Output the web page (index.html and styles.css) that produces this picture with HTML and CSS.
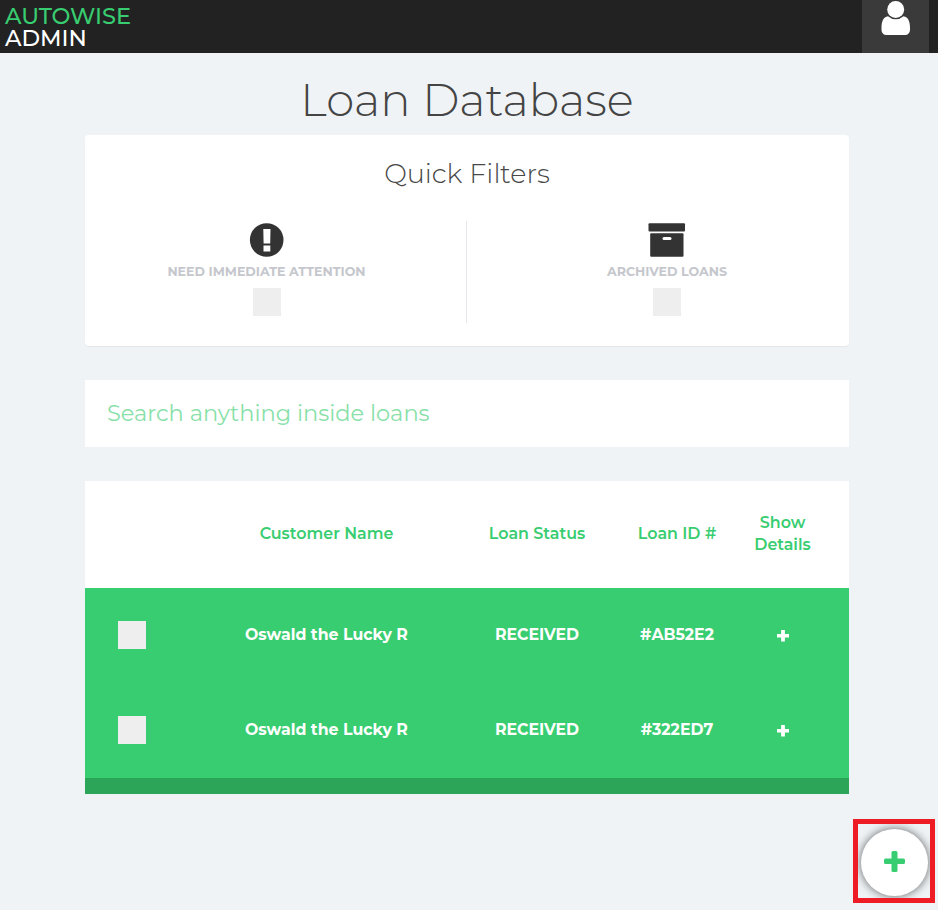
FILE: index.html
```html
<!DOCTYPE html>
<html lang="en">
<head>
<meta charset="utf-8">
<title>Autowise Admin</title>
<link rel="stylesheet" href="styles.css">
</head>
<body>
<header class="topbar">
  <div class="brand"><span class="brand-name">AUTOWISE</span><span class="brand-role">ADMIN</span></div>
  <button class="account" aria-label="Account">
    <svg width="30" height="36" viewBox="0 0 30 36"><path d="M7 16.200C2.200 17 .5 21.500.5 28v1.500C.5 33 2.500 35 6 35h17.500c3.500 0 5.500-2 5.500-5.500V28c0-6.500-1.700-11-6.500-11.800a11.500 11.500 0 0 1-15.500 0Z"/><circle cx="14.700" cy="9.500" r="8.500"/></svg>
  </button>
</header>
<main class="page">
  <h1 class="title">Loan Database</h1>
  <section class="filters">
    <h2 class="filters-title">Quick Filters</h2>
    <div class="filter-list">
      <div class="filter attention">
        <svg class="filter-icon" width="36" height="36" viewBox="0 0 36 36"><circle cx="17.700" cy="18" r="16.800"/><path class="hole" d="M14.300 7h7.200l-.3 14.500h-6.600zM14.500 23.500h6.800v6h-6.800z"/></svg>
        <span class="filter-label">NEED IMMEDIATE ATTENTION</span>
        <span class="box"></span>
      </div>
      <div class="filter">
        <svg class="filter-icon" width="38" height="36" viewBox="0 0 38 36"><rect x=".5" y="1.200" width="36.500" height="8.300" rx="1"/><rect x="2.200" y="11.200" width="33.300" height="23.600" rx="1"/><rect class="hole" x="14.500" y="15" width="9" height="3" rx="1.500"/></svg>
        <span class="filter-label">ARCHIVED LOANS</span>
        <span class="box"></span>
      </div>
    </div>
  </section>
  <input class="search" type="text" placeholder="Search anything inside loans">
  <section class="loans">
    <div class="row head">
      <span></span><span>Customer Name</span><span>Loan Status</span><span>Loan ID #</span><span>Show<br>Details</span>
    </div>
    <div class="row loan">
      <span class="box"></span><span>Oswald the Lucky R</span><span>RECEIVED</span><span>#AB52E2</span>
      <svg class="more" width="14" height="14" viewBox="0 0 14 14"><path d="M5.100 1h3.800v4h4.100v3.500H8.900v4H5.100v-4H1V5h4.100z"/></svg>
    </div>
    <div class="row loan">
      <span class="box"></span><span>Oswald the Lucky R</span><span>RECEIVED</span><span>#322ED7</span>
      <svg class="more" width="14" height="14" viewBox="0 0 14 14"><path d="M5.100 1h3.800v4h4.100v3.500H8.900v4H5.100v-4H1V5h4.100z"/></svg>
    </div>
    <div class="loans-foot"></div>
  </section>
</main>
<div class="add-frame">
  <button class="add" aria-label="Add loan">
    <svg width="22" height="22" viewBox="0 0 22 22"><path d="M9 0h3q1.500 0 1.500 1.500v6h6q1.500 0 1.500 1.500v2.500q0 1.500-1.500 1.500h-6v6.500q0 1.500-1.500 1.500H9Q7.500 21 7.500 19.500V13h-6Q0 13 0 11.500V9Q0 7.500 1.500 7.500h6v-6Q7.500 0 9 0z"/></svg>
  </button>
</div>
</body>
</html>
```
FILE: styles.css
```css
* { box-sizing: border-box; }
body {
  margin: 0;
  height: 910px;
  overflow: hidden;
  background: #eff3f6;
  font-family: Montserrat, Inter, "Open Sans", sans-serif;
  font-size: 22.5px;
  color: #333;
}
svg { display: block; }
button { border: 0; padding: 0; }

.topbar {
  display: flex;
  justify-content: space-between;
  height: 53px;
  padding-right: 9px;
  background: #222;
}
.brand {
  display: flex;
  flex-direction: column;
  padding: 5px 0 0 5px;
  font-weight: 500;
  line-height: 22px;
}
.brand-name { color: #38cd70; }
.brand-role { color: #fff; }
.account {
  display: flex;
  justify-content: center;
  width: 67px;
  background: #3a3a3a;
}
.account svg { fill: #fff; }

.page { width: 764px; margin-left: 85px; }
.title {
  margin: 0;
  height: 82px;
  padding-top: 19px;
  font-size: 45px;
  font-weight: 300;
  line-height: 55px;
  text-align: center;
  color: #444;
}

.filters {
  height: 211px;
  padding-top: 22px;
  background: #fff;
  border-radius: 4px;
  box-shadow: 0 1px 1px rgba(0, 0, 0, .05);
}
.filters-title {
  margin: 0 0 31px;
  font-size: 27px;
  font-weight: 300;
  line-height: 33px;
  text-align: center;
  color: #484848;
}
.filter-list { display: flex; }
.filter {
  display: flex;
  flex-direction: column;
  align-items: center;
  width: 382px;
  height: 102px;
  padding: 1px 0 0 18px;
}
.attention { padding: 1px 18px 0 0; border-right: 1px solid #e6e6ee; }
.filter-icon { fill: #333; }
.hole { fill: #fff; }
.filter-label {
  margin: 6px 0 8px;
  font-size: 12.65px;
  font-weight: 700;
  line-height: 16px;
  color: #c5c7cd;
}
.box { width: 28px; height: 28px; background: #eee; }

.search {
  display: block;
  width: 100%;
  height: 67px;
  margin: 34px 0;
  padding: 0 22px 2px;
  border: 0;
  background: #fff;
  font: inherit;
}
.search::placeholder { color: #38cd70; opacity: .6; }

.row {
  display: grid;
  grid-template-columns: 94px 295px 126px 154px 57px;
  align-items: center;
  justify-items: center;
  font-size: 15.75px;
  white-space: nowrap;
}
.head {
  height: 107px;
  padding-bottom: 2px;
  background: #fff;
  color: #38cd70;
  font-size: 15.9px;
  font-weight: 600;
  line-height: 22px;
  text-align: center;
}
.loan {
  height: 95px;
  padding-bottom: 2px;
  background: #38cd70;
  color: #fff;
  font-weight: 700;
}
.more { fill: #fff; margin-top: 2px; }
.loans-foot { height: 16px; background: #2ca558; }

.add-frame {
  position: fixed;
  left: 853px;
  top: 819px;
  display: flex;
  width: 82px;
  height: 84px;
  padding: 5px 0 0 3px;
  border: 5px solid #ee1c24;
  overflow: hidden;
}
.add {
  display: flex;
  flex: none;
  align-items: center;
  justify-content: center;
  width: 67px;
  height: 67px;
  padding-bottom: 2px;
  border-radius: 50%;
  background: #fff;
  box-shadow: 0 0 10px rgba(0, 0, 0, .6);
}
.add svg { fill: #38cd70; }
```
